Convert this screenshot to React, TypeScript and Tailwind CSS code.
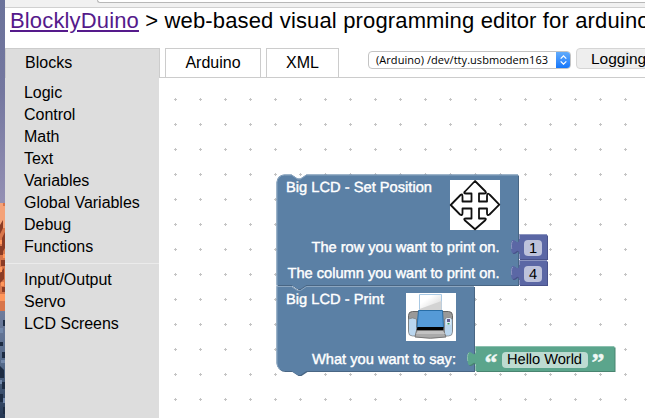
import React from "react";

const basics = ["Logic", "Control", "Math", "Text", "Variables", "Global Variables", "Debug", "Functions"];
const hardware = ["Input/Output", "Servo", "LCD Screens"];

function Desktop() {
  return (
    <svg width="5" height="418" viewBox="0 0 5 418" className="block shrink-0">
      <defs>
        <linearGradient id="sky" x1="0" y1="0" x2="0" y2="1">
          <stop offset="0" stopColor="#6b739b" />
          <stop offset="0.45" stopColor="#74779f" />
          <stop offset="1" stopColor="#9490b4" />
        </linearGradient>
        <linearGradient id="snow" x1="0" y1="0" x2="0" y2="1">
          <stop offset="0" stopColor="#6e7c9c" />
          <stop offset="0.5" stopColor="#536989" />
          <stop offset="1" stopColor="#263853" />
        </linearGradient>
      </defs>
      <rect width="5" height="204" fill="url(#sky)" />
      <rect y="203" width="5" height="110" fill="#d8754a" />
      <path d="M0 203h3v3h2v22H0z" fill="#f4a278" />
      <path d="M0 225l3-5v8l-3 6zM2 238l3-6v16l-3 5zM0 246h3v9H0zM1 260h4v6H1zM0 273l4-5v11l-4 4zM2 287h3v5H2z" fill="#8c3c25" />
      <path d="M0 240h2v4H0zM3 254h2v4H3zM0 267h2v5H0zM1 282h3v4H1zM0 294h5v7H0z" fill="#ff965b" />
      <rect y="311" width="5" height="107" fill="url(#snow)" />
      <path d="M3 320h2v6H3zM0 342h3v4H0zM2 352h3v6H2zM0 366l4 4v8H0zM2 382h3v7H2zM0 394h3v8H0zM3 407h2v7H3z" fill="#1d2c43" />
      <path d="M0 328h3v5H0zM1 360h4v3H1zM0 380h2v4H0zM3 398h2v5H3z" fill="#7288aa" />
    </svg>
  );
}

type LabelProps = { x: number; y: number; w: number; children: string; dark?: boolean };
function Label({ x, y, w, children, dark }: LabelProps) {
  return (
    <text x={x} y={y} textLength={w} fontSize="14.67" fill={dark ? "#000" : "#fff"} stroke={dark ? "none" : "#fff"} strokeWidth="0.4" textRendering="geometricPrecision">
      {children}
    </text>
  );
}

function NumberBlock({ y, value }: { y: number; value: string }) {
  const d = `M519 ${y + 0.5}H547V${y + 25}H519V${y + 20}c0 -10-8 8-8-7.5s8 2.500 8-7.500z`;
  return (
    <g>
      <path d={d} transform="translate(1 1)" fill="#49528a" />
      <path d={d} fill="#5b67a5" />
      <path d={`M519.5 ${y + 25}V${y + 20}M511.800 ${y + 15}c-.6-2-.6-7 1-8M519.5 ${y + 5}V${y + 0.5}H547`} fill="none" stroke="#8c95c0" />
      <rect x="524" y={y + 6} width="18" height="16" rx="4" fill="#bdc2db" />
      <Label x={529} y={y + 18.5} w={8} dark>{value}</Label>
    </g>
  );
}

function MoveIcon() {
  return (
    <g>
      <rect x="450" y="180" width="50" height="50" fill="#fff" />
      <path
        d="M475 181L485.500 191.500Q487 193.500 484 193.500H479V201.500H487V196Q487 192 490 195L499.300 204.700L489.500 214.500Q487 216 487 213V208.500H479V218.500H484.500Q487 218.500 485 220.500L475 229.300L465 220.500Q463 218.500 466 218.500H471.500V208.500H462.500V213Q462.500 216 460 214.500L450.700 205L460.500 195Q462.500 193 462.500 197V201.500H471.500V193.500H466Q463 193.500 465 191.500Z"
        fill="#fff"
        stroke="#111"
        strokeWidth="1.8"
        strokeLinejoin="round"
      />
    </g>
  );
}

function PrinterIcon() {
  return (
    <g>
      <defs>
        <linearGradient id="paper" x1="0" y1="0" x2="1" y2="1">
          <stop offset="0.3" stopColor="#fff" />
          <stop offset="0.8" stopColor="#ddd" />
        </linearGradient>
      </defs>
      <rect x="406" y="293" width="50" height="48" fill="#fff" />
      <rect x="408.500" y="311.500" width="44" height="22" rx="4" fill="#999" stroke="#666" />
      <path d="M408.500 319q4-2 8 0v17h-4q-4 0-4-4zM444.500 319q4-2 8 0v13q0 4-4 4h-4z" fill="#bad6ee" stroke="#777" strokeWidth=".7" />
      <path d="M419.500 311V294.500H441.500V311z" fill="url(#paper)" stroke="#a9c9e4" />
      <path d="M419.500 309l22-8v9h-22z" fill="#d3d3d3" />
      <path d="M418.500 310.500H442.500L443.500 327.500H417z" fill="#559ad7" stroke="#286da6" />
      <path d="M417.500 327h26v3.500H416.500z" fill="#000" />
      <path d="M416.500 330.500h27l2.500 6.500q-16 2.500-31 0z" fill="#aaa" stroke="#777" />
      <path d="M418 331h25l2 3h-29z" fill="#c2c2c2" />
      <rect x="446" y="318" width="5" height="7" rx="1" fill="#dceaf4" />
      <rect x="447" y="319" width="3" height="3" fill="#635c91" />
      <rect x="447.500" y="323" width="2" height="1.500" fill="#3d9963" />
    </g>
  );
}

function Workspace() {
  const first = "M276.500 182.500a8 8 0 0 1 8-8H291.500l6 4h3l6-4H518V285H306.500l-6 4h-3l-6-4H276.500z";
  const second = "M276.500 286H291.500l6 4h3l6-4H474V371H306.500l-6 4h-3l-6-4H284.500a8 8 0 0 1-8-8z";
  const green = "M475.500 346.500H614.500V371H475.500V366c0-10-8 8-8-7.500s8 2.500 8-7.500z";
  return (
    <svg width="486" height="340" viewBox="159 78 486 340" className="block" fontFamily="'Liberation Sans', Arial, sans-serif">
      <defs>
        <pattern id="grid" x="163" y="87" width="25" height="25" patternUnits="userSpaceOnUse">
          <path d="M11 12.500h3M12.500 11v3" stroke="#c4c4c4" />
        </pattern>
      </defs>
      <rect x="159" y="78" width="486" height="340" fill="#fff" />
      <rect x="159" y="78" width="486" height="340" fill="url(#grid)" />
      <path d={first} transform="translate(1 1)" fill="#496684" />
      <path d={first} fill="#5b80a5" />
      <path d="M277 286V182.500a7.500 7.500 0 0 1 7.500-7.500H291.500l6 4h3l6-4H518" fill="none" stroke="#8ca6c0" />
      <path d={second} transform="translate(1 1)" fill="#496684" />
      <path d={second} fill="#5b80a5" />
      <path d="M279.500 369a8 8 0 0 1-2.500-6V286.500H291.500l6 4h3l6-4H474" fill="none" stroke="#8ca6c0" />
      <path d="M306.500 285.500H519" stroke="#496684" />
      <Label x={286} y={192} w={146}>Big LCD - Set Position</Label>
      <MoveIcon />
      <Label x={311.5} y={252} w={188}>The row you want to print on.</Label>
      <Label x={287.5} y={278} w={212}>The column you want to print on.</Label>
      <NumberBlock y={234} value="1" />
      <NumberBlock y={260} value="4" />
      <Label x={286} y={304} w={98}>Big LCD - Print</Label>
      <PrinterIcon />
      <Label x={312} y={364} w={144}>What you want to say:</Label>
      <path d={green} transform="translate(1 1)" fill="#498470" />
      <path d={green} fill="#5ba58c" />
      <path d="M475.500 371V366M467.800 361c-.6-2-.6-7 1-8M475.500 351V346.500H614" fill="none" stroke="#8cc0af" />
      <text x="484.500" y="371" fontSize="26" fontWeight="bold" fontFamily="'Liberation Serif', serif" fill="#eff7f4" stroke="#eff7f4" strokeWidth=".4">“</text>
      <rect x="502" y="352" width="86" height="16" rx="4" fill="#bddbd1" />
      <Label x={507} y={364} w={75} dark>Hello World</Label>
      <text x="591.500" y="371" fontSize="26" fontWeight="bold" fontFamily="'Liberation Serif', serif" fill="#eff7f4" stroke="#eff7f4" strokeWidth=".4">”</text>
    </svg>
  );
}

export default function App() {
  return (
    <div className="flex h-[418px] w-[645px] overflow-hidden bg-white font-['Liberation_Sans',Arial,sans-serif] text-black">
      <Desktop />
      <div className="flex w-[640px] shrink-0 flex-col">
        <div className="flex h-2 shrink-0 justify-end border-b border-[#d0d0d0] bg-[#f1f1f1]">
          <div className="h-[3px] w-[548px] rounded-bl-[4px] border-b border-l border-[#b8b8b8] bg-white" />
        </div>
        <h1 className="h-10 shrink-0 whitespace-nowrap pl-[5px] text-[22px] leading-[25px] tracking-[0.15px]">
          <a className="text-[#551a8b] underline decoration-2 underline-offset-2">BlocklyDuino</a> &gt; web-based visual programming editor for arduino
        </h1>
        <div className="flex h-[30px] shrink-0">
          <div className="w-[155px] border border-b-0 border-[#ccc] bg-[#ddd] pl-[19px] text-base leading-7">Blocks</div>
          <div className="w-[5px] border-b border-[#ccc]" />
          <div className="w-24 border border-[#ccc] text-center text-base leading-7">Arduino</div>
          <div className="w-[5px] border-b border-[#ccc]" />
          <div className="w-[73px] border border-[#ccc] text-center text-base leading-7">XML</div>
          <div className="flex flex-1 items-start overflow-hidden border-b border-[#ccc] pl-[29px]">
            <div className="mt-[3px] flex h-[18px] w-[203px] shrink-0 items-center justify-between overflow-hidden rounded-[4px] border border-[#c4c4c4] pl-[7px] font-['Open_Sans','Noto_Sans',sans-serif] text-[11px]">
              <span className="whitespace-nowrap tracking-[0.05px]">(Arduino) /dev/tty.usbmodem163</span>
              <span className="-mr-px flex h-[18px] w-[15px] shrink-0 items-center justify-center bg-gradient-to-b from-[#65aefb] to-[#0873fb]">
                <svg width="7" height="10" viewBox="0 0 7 10" fill="none" stroke="#fff" strokeWidth="1.3">
                  <path d="M.7 3.600L3.500 .9l2.800 2.700M.7 6.400l2.800 2.700 2.800-2.700" />
                </svg>
              </span>
            </div>
            <div className="ml-[5px] h-[21px] w-[90px] shrink-0 rounded-[4px] border border-[#d5d5d5] bg-[#eee] pl-[14px] text-[15.5px] leading-[20px]">Logging</div>
          </div>
        </div>
        <div className="flex h-[340px]">
          <nav className="w-[154px] shrink-0 bg-[#ddd] pt-1 text-base leading-[22px] tracking-[-0.03px]">
            {basics.map((name) => <div key={name} className="pl-[19px]">{name}</div>)}
            <hr className="mt-[5px] mb-[5px] border-[#ebebeb]" />
            {hardware.map((name) => <div key={name} className="pl-[19px]">{name}</div>)}
          </nav>
          <Workspace />
        </div>
      </div>
    </div>
  );
}
